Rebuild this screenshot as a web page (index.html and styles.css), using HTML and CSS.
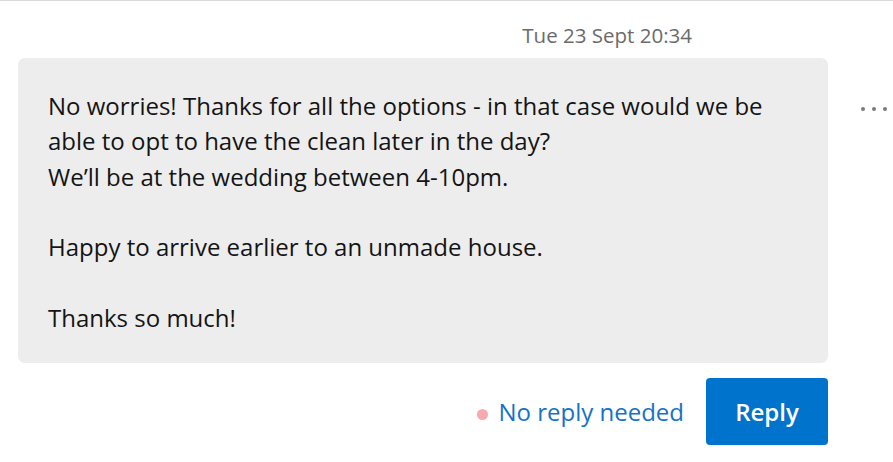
FILE: index.html
```html
<!DOCTYPE html>
<html lang="en">
<head>
<meta charset="utf-8">
<title>Message</title>
<link rel="stylesheet" href="styles.css">
</head>
<body>
<div class="thread">
  <div class="meta">
    <span class="timestamp">Tue 23 Sept 20:34</span>
  </div>
  <div class="message-row">
    <div class="bubble">
      <p class="body-text">No worries! Thanks for all the options - in that case would we be able to opt to have the clean later in the day?<br>We’ll be at the wedding between 4-10pm.<br><br>Happy to arrive earlier to an unmade house.<br><br>Thanks so much!</p>
    </div>
    <button class="more" aria-label="More options">
      <span class="dot"></span><span class="dot"></span><span class="dot"></span>
    </button>
  </div>
  <div class="actions">
    <span class="status"><span class="status-dot"></span>No reply needed</span>
    <button class="reply-btn">Reply</button>
  </div>
</div>
</body>
</html>
```

FILE: styles.css
```css
* { box-sizing: border-box; }
html, body { margin: 0; padding: 0; background: #ffffff; }
body {
  font-family: "Open Sans", "Noto Sans", sans-serif;
  color: #1b1b1b;
  width: 893px;
  height: 462px;
  overflow: hidden;
}
.thread {
  border-top: 1px solid #dadada;
}
.meta {
  display: flex;
  justify-content: flex-end;
  padding: 20px 201px 0 0;
  height: 57px;
}
.timestamp {
  font-size: 20.5px;
  line-height: 28px;
  color: #6b6b6b;
}
.message-row {
  display: flex;
  align-items: flex-start;
  padding-left: 18px;
}
.bubble {
  width: 810px;
  background: #ededed;
  border-radius: 7px;
  padding: 30px 30px 28px 30px;
}
.body-text {
  margin: 0;
  font-size: 24px;
  line-height: 35.33px;
  color: #141414;
}
.more {
  display: flex;
  gap: 7px;
  margin: 49px 0 0 33px;
  padding: 0;
  border: 0;
  background: none;
}
.dot {
  width: 4px;
  height: 4px;
  border-radius: 50%;
  background: #7a7a7a;
}
.actions {
  display: flex;
  justify-content: flex-end;
  align-items: center;
  padding: 15px 65px 0 0;
}
.status {
  display: flex;
  align-items: center;
  gap: 10px;
  font-size: 24px;
  color: #1672c4;
  margin-right: 22px;
}
.status-dot {
  width: 11px;
  height: 11px;
  border-radius: 50%;
  background: #f7a9ad;
  margin-top: 6px;
}
.reply-btn {
  width: 122px;
  height: 67px;
  border: 0;
  border-radius: 4px;
  background: #0073cc;
  color: #ffffff;
  font-family: "Open Sans", "Noto Sans", sans-serif;
  font-weight: 600;
  font-size: 24px;
  padding: 0;
}
```
